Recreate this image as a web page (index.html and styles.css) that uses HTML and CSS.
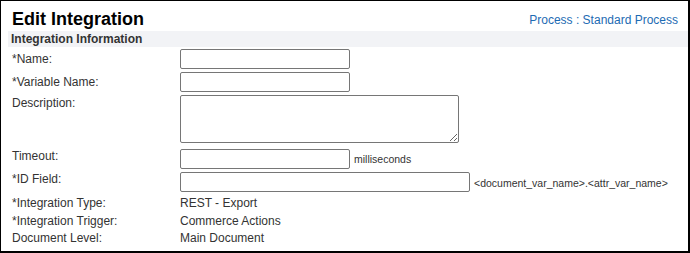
FILE: index.html
```html
<!DOCTYPE html>
<html lang="en">
<head>
    <meta charset="UTF-8">
    <meta name="viewport" content="width=device-width, initial-scale=1.0">
    <title>Edit Integration</title>
    <link rel="stylesheet" href="styles.css">
</head>
<body>
    <div class="panel">
        <div class="header">
            <div class="title">Edit Integration</div>
            <a class="process" href="#">Process : Standard Process</a>
        </div>
        <div class="section">Integration Information</div>

        <div class="form">
            <div class="row mid r-input">
                <label class="label">*Name:</label>
                <input type="text" class="field short">
            </div>
            <div class="row mid r-input">
                <label class="label">*Variable Name:</label>
                <input type="text" class="field short">
            </div>
            <div class="row r-desc">
                <label class="label">Description:</label>
                <textarea class="field area"></textarea>
            </div>
            <div class="row r-input">
                <label class="label">Timeout:</label>
                <input type="text" class="field short">
                <span class="hint">milliseconds</span>
            </div>
            <div class="row r-id">
                <label class="label">*ID Field:</label>
                <input type="text" class="field long">
                <span class="hint">&lt;document_var_name&gt;.&lt;attr_var_name&gt;</span>
            </div>
            <div class="row r-text">
                <span class="label">*Integration Type:</span>
                <span class="value">REST - Export</span>
            </div>
            <div class="row r-text">
                <span class="label">*Integration Trigger:</span>
                <span class="value">Commerce Actions</span>
            </div>
            <div class="row r-text">
                <span class="label">Document Level:</span>
                <span class="value">Main Document</span>
            </div>
        </div>
    </div>
</body>
</html>
```

FILE: styles.css
```css
*{
    margin:0;
    padding:0;
    box-sizing:border-box;
}

body{
    font-family:"Liberation Sans", Arial, sans-serif;
    color:#333;
    background:#fff;
}

.panel{
    width:690px;
    height:253px;
    border:solid #000;
    border-width:1px 2px 2px 1px;
    padding:8px 0 0 7px;
}

.header{
    display:flex;
    justify-content:space-between;
    align-items:baseline;
    height:21px;
    margin-bottom:1px;
}
.title{
    font:700 18px/21px "Liberation Sans", Arial, sans-serif;
    color:#000;
    margin-left:4px;
}
.process{
    font-size:12px;
    color:#1d6bb3;
    text-decoration:none;
    margin-right:10px;
    position:relative;
    top:-1px;
}

.section{
    background:#f2f3f6;
    font:700 12px/14px "Liberation Sans", Arial, sans-serif;
    padding:1px 3px;
    height:16px;
    margin-bottom:2px;
}

.row{
    display:flex;
    align-items:flex-start;
    font-size:12px;
    line-height:14px;
}
.r-input{ height:23px; }
.r-desc{ height:54px; }
.r-id{ height:24px; }
.r-text{ height:17.5px; }

.label{
    width:172px;
    padding-left:4px;
    flex-shrink:0;
}
.mid .label{
    padding-top:3px;
}
.r-desc .label{
    margin-top:1px;
}

.field{
    border:1px solid #767676;
    border-radius:2px;
    background:#fff;
    font:12px "Liberation Sans", Arial, sans-serif;
    height:20px;
}
.short{ width:170px; }
.long{ width:290px; }
.area{
    width:279px;
    height:48px;
    display:block;
}

.hint{
    font-size:10.5px;
    margin-left:4px;
    align-self:center;
    position:relative;
    top:-2px;
}
.r-id .hint{
    top:-1px;
}
```
